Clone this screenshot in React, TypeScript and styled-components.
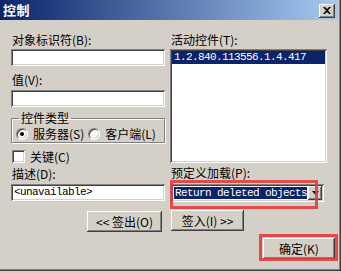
import React from "react";
import styled, { createGlobalStyle } from "styled-components";

const Global = createGlobalStyle`
  html, body { margin: 0; padding: 0; background: #d4d0c8; }
  body { font-family: "Noto Sans CJK SC", "Liberation Sans", sans-serif; font-size: 12px; }
`;

const raised = `box-shadow: inset -1px -1px #404040, inset 1px 1px #ffffff, inset -2px -2px #808080, inset 2px 2px #d4d0c8;`;
const sunken = `box-shadow: inset 1px 1px #808080, inset -1px -1px #ffffff, inset 2px 2px #404040, inset -2px -2px #d4d0c8;`;

const Window = styled.div`
  width: 341px;
  height: 271px;
  background: #d4d0c8;
  box-shadow: inset -1px -1px #404040, inset -2px -2px #808080;
  display: flex;
  flex-direction: column;
  color: #000;
`;

const TitleBar = styled.div`
  height: 20px;
  margin-right: 3px;
  display: flex;
  align-items: center;
  justify-content: space-between;
  padding: 0 3px 0 3px;
  background: linear-gradient(to right, #0a246a, #a6caf0);
`;

const Title = styled.span`
  color: #fff;
  font-weight: bold;
  font-size: 13px;
  line-height: 14px;
  letter-spacing: 0.5px;
`;

const CloseBtn = styled.div`
  width: 16px;
  height: 14px;
  margin-top: 1px;
  background: #d4d0c8;
  ${raised}
  display: flex;
  align-items: center;
  justify-content: center;
`;

const Body = styled.div`
  display: flex;
  flex-direction: column;
  padding: 13px 0 0 11px;
`;

const Columns = styled.div`
  display: grid;
  grid-template-columns: 154px 157px;
  column-gap: 5px;
`;

const Col = styled.div`
  display: flex;
  flex-direction: column;
`;

const Label = styled.div<{ $mt?: number }>`
  height: 14px;
  line-height: 14px;
  font-size: 12px;
  margin-top: ${(p) => p.$mt ?? 0}px;
  padding-left: 1px;
  white-space: nowrap;
`;

const Field = styled.div<{ $mt?: number }>`
  height: 17px;
  margin-top: ${(p) => p.$mt ?? 0}px;
  background: #fff;
  ${sunken}
  padding: 2px 3px;
  box-sizing: border-box;
  font-family: "Liberation Mono", monospace;
  font-size: 11px;
  letter-spacing: -0.6px;
  line-height: 13px;
  white-space: nowrap;
  overflow: hidden;
`;

const Group = styled.fieldset`
  margin: 5px 0 0 0;
  padding: 0 4px 0 4px;
  min-width: 0;
  border: 1px solid #808080;
  box-shadow: inset 1px 1px #fff, 1px 1px #fff;
  height: 31px;
  box-sizing: border-box;
`;

const Legend = styled.legend`
  padding: 0 2px;
  margin-left: 3px;
  line-height: 12px;
  font-size: 12px;
`;

const RadioRow = styled.div`
  display: flex;
  align-items: center;
  gap: 4px;
  height: 13px;
  margin-top: 3px;
`;

const RadioItem = styled.label`
  display: flex;
  align-items: center;
  gap: 5px;
  line-height: 12px;
  white-space: nowrap;
`;

const RadioCircle = styled.span<{ $checked?: boolean }>`
  width: 12px;
  height: 12px;
  border-radius: 50%;
  background: #fff;
  box-sizing: border-box;
  border: 1px solid #808080;
  border-right-color: #fff;
  border-bottom-color: #fff;
  box-shadow: inset 1px 1px #404040, inset -1px -1px #d4d0c8;
  display: flex;
  align-items: center;
  justify-content: center;
  &::after {
    content: "";
    width: 4px;
    height: 4px;
    border-radius: 50%;
    background: ${(p) => (p.$checked ? "#000" : "transparent")};
  }
`;

const CheckRow = styled.label`
  display: flex;
  align-items: center;
  gap: 5px;
  margin-top: 7px;
  height: 13px;
  line-height: 14px;
  padding-left: 1px;
`;

const CheckBox = styled.span`
  width: 13px;
  height: 13px;
  background: #fff;
  ${sunken}
`;

const Button = styled.div<{ $w: number }>`
  width: ${(p) => p.$w}px;
  height: 21px;
  background: #d4d0c8;
  ${raised}
  display: flex;
  align-items: center;
  justify-content: center;
  line-height: 14px;
  white-space: nowrap;
  gap: 4px;
`;

const LeftButtonRow = styled.div`
  display: flex;
  justify-content: flex-end;
  margin-top: 10px;
  padding-right: 3px;
`;

const RightButtonRow = styled.div`
  display: flex;
  margin-top: 8px;
  padding-left: 1px;
`;

const ListBox = styled.div`
  height: 114px;
  margin-top: 2px;
  background: #fff;
  ${sunken}
  padding: 2px;
  box-sizing: border-box;
`;

const ListItem = styled.div<{ $selected?: boolean }>`
  height: 13px;
  line-height: 13px;
  padding-left: 2px;
  font-family: "Liberation Mono", monospace;
  font-size: 11px;
  letter-spacing: -0.6px;
  background: ${(p) => (p.$selected ? "#0a246a" : "transparent")};
  color: ${(p) => (p.$selected ? "#fff" : "#000")};
`;

const ComboWrap = styled.div`
  position: relative;
  margin-top: 4px;
  margin-left: 1px;
  width: 153px;
`;

const Combo = styled.div`
  height: 18px;
  background: #fff;
  ${sunken}
  padding: 2px;
  box-sizing: border-box;
  display: flex;
  align-items: stretch;
  gap: 1px;
`;

const ComboText = styled.div`
  flex: 1;
  margin: 1px 0 1px 1px;
  background: #0a246a;
  color: #fff;
  font-family: "Liberation Mono", monospace;
  font-size: 11px;
  letter-spacing: -0.6px;
  line-height: 12px;
  padding-left: 1px;
  white-space: nowrap;
  overflow: hidden;
`;

const ComboArrow = styled.div`
  width: 14px;
  background: #d4d0c8;
  ${raised}
  display: flex;
  align-items: center;
  justify-content: center;
`;

const Highlight = styled.div<{ $l: number; $t: number; $w: number; $h: number }>`
  position: absolute;
  left: ${(p) => p.$l}px;
  top: ${(p) => p.$t}px;
  width: ${(p) => p.$w}px;
  height: ${(p) => p.$h}px;
  border: 3px solid rgba(226, 60, 60, 0.9);
  box-sizing: border-box;
  pointer-events: none;
`;

const OkRow = styled.div`
  display: flex;
  justify-content: flex-end;
  margin-top: 6px;
  padding-right: 6px;
`;

const OkWrap = styled.div`
  position: relative;
`;

export default function App() {
  return (
    <>
      <Global />
      <Window>
        <TitleBar>
          <Title>控制</Title>
          <CloseBtn>
            <svg width="8" height="7" viewBox="0 0 8 7">
              <path d="M0 0h2l2 2 2-2h2L5 3.5 8 7H6L4 5 2 7H0l3-3.5z" fill="#000" />
            </svg>
          </CloseBtn>
        </TitleBar>
        <Body>
          <Columns>
            <Col>
              <Label>对象标识符(B):</Label>
              <Field $mt={2} />
              <Label $mt={7}>值(V):</Label>
              <Field $mt={3} />
              <Group>
                <Legend>控件类型</Legend>
                <RadioRow>
                  <RadioItem>
                    <RadioCircle $checked />
                    服务器(S)
                  </RadioItem>
                  <RadioItem>
                    <RadioCircle />
                    客户端(L)
                  </RadioItem>
                </RadioRow>
              </Group>
              <CheckRow>
                <CheckBox />
                关键(C)
              </CheckRow>
              <Label $mt={4}>描述(D):</Label>
              <Field $mt={3}>&lt;unavailable&gt;</Field>
              <LeftButtonRow>
                <Button $w={75}>&lt;&lt; 签出(O)</Button>
              </LeftButtonRow>
            </Col>
            <Col>
              <Label>活动控件(T):</Label>
              <ListBox>
                <ListItem $selected>1.2.840.113556.1.4.417</ListItem>
              </ListBox>
              <Label $mt={3}>预定义加载(P):</Label>
              <ComboWrap>
                <Combo>
                  <ComboText>Return deleted objects</ComboText>
                  <ComboArrow>
                    <svg width="7" height="4" viewBox="0 0 7 4">
                      <path d="M0 0h7L3.5 4z" fill="#000" />
                    </svg>
                  </ComboArrow>
                </Combo>
                <Highlight $l={-1} $t={-4} $w={148} $h={29} />
              </ComboWrap>
              <RightButtonRow>
                <Button $w={73}>签入(I) &gt;&gt;</Button>
              </RightButtonRow>
            </Col>
          </Columns>
          <OkRow>
            <OkWrap>
              <Button $w={72}>确定(K)</Button>
              <Highlight $l={-4} $t={-4} $w={79} $h={27} />
            </OkWrap>
          </OkRow>
        </Body>
      </Window>
    </>
  );
}
